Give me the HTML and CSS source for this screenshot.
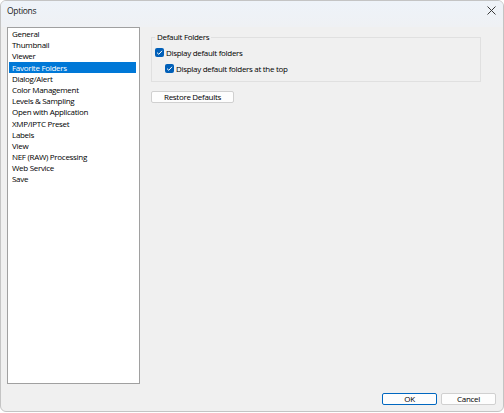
FILE: index.html
```html
<!DOCTYPE html>
<html>
<head>
<meta charset="utf-8">
<link rel="stylesheet" href="styles.css">
</head>
<body>
<div class="window">
  <div class="titlebar">
    <span class="title">Options</span>
    <svg class="close" width="9" height="9" viewBox="0 0 9 9"><path d="M0.5 0.5L8.5 8.5M8.5 0.5L0.5 8.5" stroke="#3a3a3a" stroke-width="1"/></svg>
  </div>
  <div class="main">
    <ul class="list">
      <li>General</li>
      <li>Thumbnail</li>
      <li>Viewer</li>
      <li class="sel">Favorite Folders</li>
      <li>Dialog/Alert</li>
      <li>Color Management</li>
      <li>Levels &amp; Sampling</li>
      <li>Open with Application</li>
      <li>XMP/IPTC Preset</li>
      <li>Labels</li>
      <li>View</li>
      <li>NEF (RAW) Processing</li>
      <li>Web Service</li>
      <li>Save</li>
    </ul>
    <div class="panel">
      <div class="group">
        <span class="legend">Default Folders</span>
        <label class="check"><span class="box"><svg width="9" height="9" viewBox="0 0 9 9"><path d="M2 4.6L3.8 6.3L7 2.8" fill="none" stroke="#fff" stroke-width="1"/></svg></span>Display default folders</label>
        <label class="check sub"><span class="box"><svg width="9" height="9" viewBox="0 0 9 9"><path d="M2 4.6L3.8 6.3L7 2.8" fill="none" stroke="#fff" stroke-width="1"/></svg></span>Display default folders at the top</label>
      </div>
      <button class="btn restore">Restore Defaults</button>
    </div>
  </div>
  <div class="footer">
    <button class="btn ok">OK</button>
    <button class="btn cancel">Cancel</button>
  </div>
</div>
</body>
</html>
```
FILE: styles.css
```css
html, body { margin: 0; padding: 0; background: #ffffff; }
body { font-family: "Open Sans", "Noto Sans", sans-serif; font-size: 8px; letter-spacing: -0.3px; color: #000; }
.window {
  width: 504px; height: 412px; box-sizing: border-box;
  border: 1px solid #c4c4c4; border-radius: 6px;
  background: #f0f0f0; overflow: hidden;
  display: flex; flex-direction: column;
}
.titlebar {
  height: 26px; flex: none; box-sizing: border-box;
  background: linear-gradient(#eef3f9, #eff1f4);
  display: flex; align-items: center; justify-content: space-between;
  padding: 0 7px 7px 6px;
}
.title { font-size: 8.5px; color: #1a1a1a; }
.close { display: block; }
.main { display: flex; padding-left: 6px; height: 357px; flex: none; }
.list {
  list-style: none; margin: 0; padding: 0 1px;
  width: 133px; height: 357px; box-sizing: border-box;
  background: #fff; border: 1px solid #a0a0a0;
}
.list li { height: 10.2px; padding-top: 1px; line-height: 10.2px; padding-left: 3px; white-space: nowrap; }
.list li.sel { background: #0078d7; color: #fff; margin-right: 2px; }
.panel { margin-left: 11px; padding-top: 11px; width: 330px; }
.group {
  position: relative; border: 1px solid #e0e0e0; height: 45px; box-sizing: border-box;
  padding: 9px 0 0 3px; width: 330px; margin-top: -1px;
}
.legend {
  position: absolute; left: 3px; top: -7px; background: #f0f0f0; padding: 0 2px; line-height: 12px;
}
.check { display: flex; align-items: center; height: 11px; white-space: nowrap; }
.check.sub { margin-top: 5px; padding-left: 10px; }
.box {
  width: 9px; height: 9px; background: #005fb8; border-radius: 2px; margin-right: 2px;
  display: flex; flex: none;
}
.box svg { display: block; }
.btn {
  font-family: inherit; font-size: 8px; letter-spacing: -0.3px; color: #000;
  background: #fdfdfd; border: 1px solid #d0d0d0; border-radius: 2px;
  padding: 0; height: 12px; line-height: 10px; box-sizing: border-box;
}
.restore { width: 83px; margin-top: 9px; display: block; }
.footer { display: flex; justify-content: flex-end; gap: 4px; padding: 9px 7px 0 0; }
.ok { width: 55px; border-color: #0067c0; }
.cancel { width: 55px; }
```
